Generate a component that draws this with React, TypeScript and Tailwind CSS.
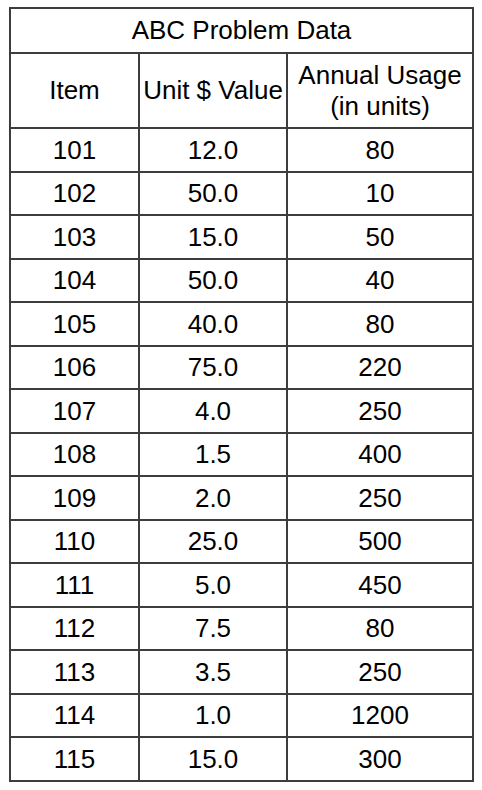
import React from "react";

const rows: [string, string, string][] = [
  ["101", "12.0", "80"],
  ["102", "50.0", "10"],
  ["103", "15.0", "50"],
  ["104", "50.0", "40"],
  ["105", "40.0", "80"],
  ["106", "75.0", "220"],
  ["107", "4.0", "250"],
  ["108", "1.5", "400"],
  ["109", "2.0", "250"],
  ["110", "25.0", "500"],
  ["111", "5.0", "450"],
  ["112", "7.5", "80"],
  ["113", "3.5", "250"],
  ["114", "1.0", "1200"],
  ["115", "15.0", "300"],
];

export default function App() {
  return (
    <div className="w-[482px] h-[790px] bg-white pt-[7px] pl-[9px] text-black" style={{ fontFamily: '"Liberation Sans", Arial, sans-serif' }}>
      <table className="border-collapse table-fixed w-[463px]">
        <colgroup>
          <col className="w-[129px]" />
          <col className="w-[148px]" />
          <col className="w-[186px]" />
        </colgroup>
        <thead>
          <tr className="h-[45px]">
            <th colSpan={3} className="border-2 border-[#3d3d3d] font-normal text-[26px] text-center p-0">ABC Problem Data</th>
          </tr>
          <tr className="h-[75px]">
            <th className="border-2 border-[#3d3d3d] font-normal text-[26px] text-center p-0">Item</th>
            <th className="border-2 border-[#3d3d3d] font-normal text-[26px] text-center p-0 whitespace-nowrap">Unit $ Value</th>
            <th className="border-2 border-[#3d3d3d] font-normal text-[26px] leading-[31px] text-center p-0 whitespace-nowrap">Annual Usage<br />(in units)</th>
          </tr>
        </thead>
        <tbody>
          {rows.map((r, i) => (
            <tr key={r[0]} className={i % 2 === 0 ? "h-[44px]" : "h-[43px]"}>
              <td className="border-2 border-[#3d3d3d] text-[26px] text-center p-0">{r[0]}</td>
              <td className="border-2 border-[#3d3d3d] text-[26px] text-center p-0">{r[1]}</td>
              <td className="border-2 border-[#3d3d3d] text-[26px] text-center p-0">{r[2]}</td>
            </tr>
          ))}
        </tbody>
      </table>
    </div>
  );
}
